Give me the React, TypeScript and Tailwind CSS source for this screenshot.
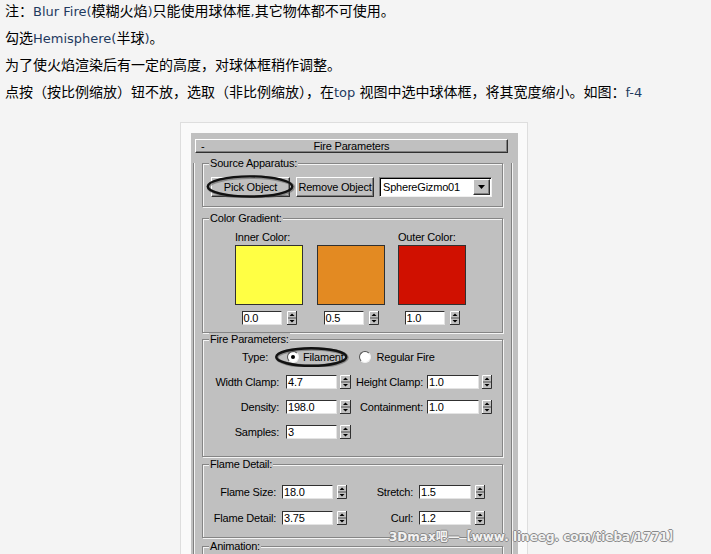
import React from "react";

const EN = ({ children }: { children: React.ReactNode }) => (
    <span className="font-['DejaVu_Sans','Noto_Sans_CJK_SC',sans-serif] text-[13px] leading-none text-[#1f3a5f]">{children}</span>
);

function Spin({ w = 10, className = "" }: { w?: number; className?: string }) {
    const m = w / 2;
    return (
        <svg width={w} height={14} viewBox={`0 0 ${w} 14`} className={`shrink-0 ${className}`}>
            <rect x="0" y="0" width={w} height="14" fill="#c0c0c0" />
            <path d={`M0 13.5 H${w - 0.5} V0`} stroke="#303030" fill="none" />
            <path d={`M0.5 13 V0.5 H${w - 1}`} stroke="#ffffff" fill="none" />
            <line x1="1" y1="7" x2={w - 1} y2="7" stroke="#505050" />
            <path d={`M${m - 2.5} 5 L${m} 2.5 L${m + 2.5} 5Z`} fill="#000" />
            <path d={`M${m - 2.5} 9 L${m} 11.5 L${m + 2.5} 9Z`} fill="#000" />
        </svg>
    );
}

function Input({ value, className = "" }: { value: string; className?: string }) {
    return (
        <div className={`h-[14px] shrink-0 bg-white border border-[#303030] border-r-[#e4e4e4] border-b-[#e4e4e4] pl-[1px] text-[11px] leading-[12px] text-black ${className}`}>
            {value}
        </div>
    );
}

// hand-drawn highlight ring laid over a control
function Oval({ className }: { className: string }) {
    return (
        <div className={`absolute pointer-events-none ${className}`}>
            <svg className="block w-full h-full" viewBox="0 0 100 100" preserveAspectRatio="none">
                <ellipse cx="51" cy="53" rx="47" ry="43" fill="none" stroke="#555" strokeWidth="3.5" vectorEffect="non-scaling-stroke" opacity="0.5" />
                <ellipse cx="50" cy="50" rx="47" ry="44" fill="none" stroke="#111" strokeWidth="2.4" vectorEffect="non-scaling-stroke" />
            </svg>
        </div>
    );
}

function Radio({ checked }: { checked?: boolean }) {
    return (
        <span className="w-[12px] h-[12px] shrink-0 rounded-full bg-white border border-[#505050] border-r-[#f0f0f0] border-b-[#f0f0f0] flex items-center justify-center">
            {checked && <span className="w-[4px] h-[4px] rounded-full bg-black" />}
        </span>
    );
}

function Group({ label, className, children }: { label: string; className: string; children?: React.ReactNode }) {
    return (
        <div className={`relative border border-[#858585] shadow-[inset_1px_1px_0_#f4f4f4,1px_1px_0_#f4f4f4] ${className}`}>
            <span className="absolute -top-[7px] left-[6px] bg-[#c0c0c0] px-[1px] leading-[13px]">{label}</span>
            {children}
        </div>
    );
}

const raised = "bg-[#c0c0c0] border border-t-white border-l-white border-b-[#303030] border-r-[#303030] shadow-[inset_-1px_-1px_0_#808080]";

function Panel() {
    return (
        <div className="w-[327px] h-[440px] bg-[#c0c0c0] pt-[6px] pl-[2px] font-['Liberation_Sans',Arial,sans-serif] text-[11px] tracking-[-0.2px] text-black">
            <div className="w-[319px]">
                <div className={`ml-[2px] mr-[4px] h-[14px] flex items-center leading-[12px] ${raised}`}>
                    <span className="w-[14px] pl-[5px]">-</span>
                    <span className="flex-1 text-center">Fire Parameters</span>
                    <span className="w-[14px]" />
                </div>
                <div className="border-l border-r border-[#808080] shadow-[inset_1px_0_0_#f4f4f4,1px_0_0_#f4f4f4] px-[8px] h-[420px]">
                    <Group label="Source Apparatus:" className="mt-[10px] pt-[13px] pb-[9px] pl-[8px]">
                        <div className="flex items-center h-[20px]">
                            <div className="relative">
                                <div className={`w-[79px] h-[20px] flex items-center justify-center whitespace-nowrap ${raised}`}>Pick Object</div>
                                <Oval className="-left-[6px] -right-[5px] -top-[2px] -bottom-[1px]" />
                            </div>
                            <div className={`ml-[6px] w-[78px] h-[20px] flex items-center justify-center whitespace-nowrap ${raised}`}>Remove Object</div>
                            <div className="ml-[5px] w-[113px] h-[20px] flex bg-white border border-[#808080] border-r-[#f0f0f0] border-b-[#f0f0f0] shadow-[inset_1px_1px_0_#000]">
                                <span className="flex-1 pl-[3px] leading-[18px]">SphereGizmo01</span>
                                <span className={`w-[17px] mt-[1px] mr-[1px] h-[16px] flex items-center justify-center ${raised}`}>
                                    <svg width="8" height="5" viewBox="0 0 8 5"><path d="M0 0 H7 L3.5 4Z" fill="#000" /></svg>
                                </span>
                            </div>
                        </div>
                    </Group>

                    <Group label="Color Gradient:" className="mt-[11px] pt-[12px] pb-[7px] pl-[32px]">
                        <div className="flex">
                            {[
                                { label: "Inner Color:", bg: "bg-[#ffff44]", v: "0.0", ml: "" },
                                { label: "", bg: "bg-[#e38a22]", v: "0.5", ml: "ml-[14px]" },
                                { label: "Outer Color:", bg: "bg-[#d01000]", v: "1.0", ml: "ml-[13px]" },
                            ].map((c) => (
                                <div key={c.v} className={`w-[68px] flex flex-col ${c.ml}`}>
                                    <span className="h-[13px] leading-[13px] whitespace-nowrap">{c.label}</span>
                                    <div className={`mt-[1px] h-[60px] border border-[#303030] ${c.bg}`} />
                                    <div className="mt-[6px] flex justify-center items-center gap-[5px]">
                                        <Input value={c.v} className="w-[40px]" />
                                        <Spin />
                                    </div>
                                </div>
                            ))}
                        </div>
                    </Group>

                    <Group label="Fire Parameters:" className="mt-[6px] pt-[10px] pb-[17px] flex flex-col gap-[11px]">
                        <div className="flex items-center h-[14px]">
                            <span className="w-[65px] text-right">Type:</span>
                            <span className="relative ml-[19px] flex items-center">
                                <Radio checked />
                                <span className="ml-[4px] leading-[14px]">Filament</span>
                                <Oval className="-left-[13px] -right-[5px] -top-[3px] -bottom-[3px]" />
                            </span>
                            <span className="ml-[15px]"><Radio /></span>
                            <span className="ml-[6px]">Regular Fire</span>
                        </div>
                        <div className="flex items-center h-[14px]">
                            <span className="w-[76px] text-right">Width Clamp:</span>
                            <Input value="4.7" className="ml-[7px] w-[51px]" />
                            <Spin w={11} className="ml-[3px]" />
                            <span className="w-[72px] text-right">Height Clamp:</span>
                            <Input value="1.0" className="ml-[4px] w-[52px]" />
                            <Spin className="ml-[3px]" />
                        </div>
                        <div className="flex items-center h-[14px]">
                            <span className="w-[76px] text-right">Density:</span>
                            <Input value="198.0" className="ml-[7px] w-[51px]" />
                            <Spin w={11} className="ml-[3px]" />
                            <span className="w-[72px] text-right">Containment:</span>
                            <Input value="1.0" className="ml-[4px] w-[52px]" />
                            <Spin className="ml-[3px]" />
                        </div>
                        <div className="flex items-center h-[14px]">
                            <span className="w-[76px] text-right">Samples:</span>
                            <Input value="3" className="ml-[7px] w-[51px]" />
                            <Spin w={11} className="ml-[3px]" />
                        </div>
                    </Group>

                    <Group label="Flame Detail:" className="mt-[7px] pt-[20px] pb-[12px] flex flex-col gap-[12px]">
                        <div className="flex items-center h-[14px]">
                            <span className="w-[73px] text-right">Flame Size:</span>
                            <Input value="18.0" className="ml-[6px] w-[51px]" />
                            <Spin className="ml-[4px]" />
                            <span className="w-[66px] text-right">Stretch:</span>
                            <Input value="1.5" className="ml-[6px] w-[52px]" />
                            <Spin className="ml-[4px]" />
                        </div>
                        <div className="flex items-center h-[14px]">
                            <span className="w-[73px] text-right">Flame Detail:</span>
                            <Input value="3.75" className="ml-[6px] w-[51px]" />
                            <Spin className="ml-[4px]" />
                            <span className="w-[66px] text-right">Curl:</span>
                            <Input value="1.2" className="ml-[6px] w-[52px]" />
                            <Spin className="ml-[4px]" />
                        </div>
                    </Group>

                    <Group label="Animation:" className="mt-[8px] h-[40px]" />
                </div>
            </div>
        </div>
    );
}

export default function App() {
    return (
        <div className="relative h-[554px] overflow-hidden bg-[#f4f4f4] font-['Noto_Sans_CJK_SC',sans-serif] text-[14px] leading-[20px] text-black">
            <div className="px-[5px] flex flex-col gap-[7px]">
                <p className="h-[20px]">注：<EN>Blur Fire(</EN>模糊火焰<EN>)</EN>只能使用球体框<EN>,</EN>其它物体都不可使用。</p>
                <p className="h-[20px]">勾选<EN>Hemisphere(</EN>半球<EN>)</EN>。</p>
                <p className="h-[20px]">为了使火焰渲染后有一定的高度，对球体框稍作调整。</p>
                <p className="h-[20px]">点按（按比例缩放）钮不放，选取（非比例缩放），在<EN>top </EN>视图中选中球体框，将其宽度缩小。如图：<EN>f-4</EN></p>
            </div>

            <div className="ml-[180px] mt-[21px] w-[348px] border border-[#dedede] bg-[#fafafa] p-[10px]">
                <Panel />
            </div>

            <div className="absolute left-[389px] top-[529px] whitespace-nowrap font-['DejaVu_Sans','Noto_Sans_CJK_SC',sans-serif] font-bold text-[12px] leading-[16px] text-[#f2f2f2] [text-shadow:1px_0_0_#8a8a8a,-1px_0_0_#8a8a8a,0_1px_0_#8a8a8a,0_-1px_0_#8a8a8a]">
                3Dmax吧—【www. lineeg. com/tieba/1771】
            </div>
        </div>
    );
}
